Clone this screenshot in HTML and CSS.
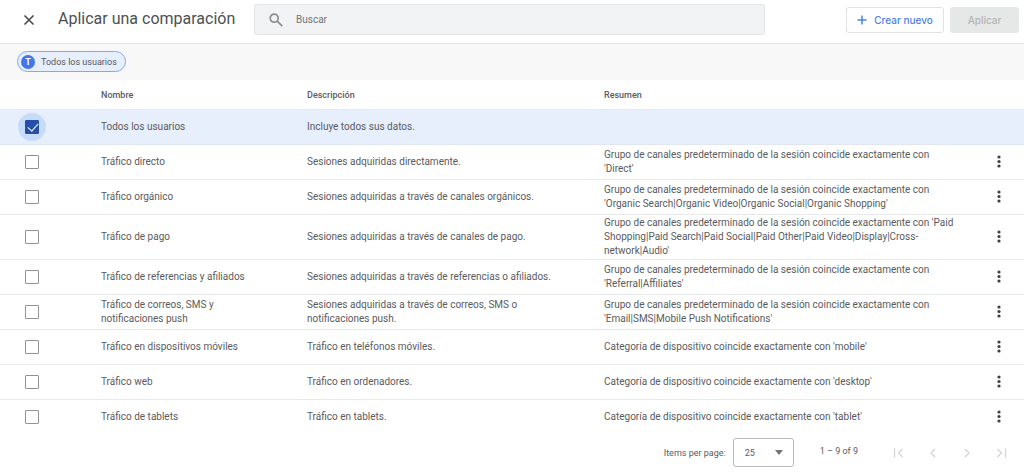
FILE: index.html
```html
<!DOCTYPE html>
<html lang="es">
<head>
<meta charset="utf-8">
<title>Aplicar una comparación</title>
<link rel="stylesheet" href="styles.css">
</head>
<body>
<svg class="defs" aria-hidden="true">
  <symbol id="more" viewBox="0 0 4 14"><circle cx="2" cy="2" r="1.6"/><circle cx="2" cy="6.500" r="1.600"/><circle cx="2" cy="11" r="1.600"/></symbol>
</svg>
<header class="topbar">
  <button class="close" aria-label="Cerrar"><svg width="12" height="12" viewBox="0 0 12 12"><path d="M1.5 1.5l9 9M10.500 1.500l-9 9"/></svg></button>
  <h1 class="title">Aplicar una comparación</h1>
  <label class="search">
    <svg width="14" height="14" viewBox="0 0 14 14"><circle cx="5.200" cy="5.200" r="4"/><path d="M8.200 8.200l5 5"/></svg>
    <input type="text" placeholder="Buscar" aria-label="Buscar">
  </label>
  <div class="actions">
    <button class="btn create"><svg width="10" height="10" viewBox="0 0 10 10"><path d="M5 0.500v9M0.500 5h9"/></svg>Crear nuevo</button>
    <button class="btn apply" disabled>Aplicar</button>
  </div>
</header>
<div class="chips"><button class="chip"><span class="badge">T</span>Todos los usuarios</button></div>
<main>
<table class="list">
  <colgroup><col class="c-check"><col class="c-name"><col class="c-desc"><col class="c-sum"><col class="c-menu"></colgroup>
  <thead><tr><th></th><th scope="col">Nombre</th><th scope="col">Descripción</th><th scope="col">Resumen</th><th></th></tr></thead>
  <tbody>
    <tr class="selected"><td><span class="halo"><input type="checkbox" checked aria-labelledby="n1"></span></td><td id="n1">Todos los usuarios</td><td>Incluye todos sus datos.</td><td></td><td></td></tr>
    <tr><td><input type="checkbox" aria-labelledby="n2"></td><td id="n2">Tráfico directo</td><td>Sesiones adquiridas directamente.</td><td>Grupo de canales predeterminado de la sesión coincide exactamente con 'Direct'</td><td><button class="menu" aria-label="Más opciones"><svg><use href="#more"/></svg></button></td></tr>
    <tr><td><input type="checkbox" aria-labelledby="n3"></td><td id="n3">Tráfico orgánico</td><td>Sesiones adquiridas a través de canales orgánicos.</td><td>Grupo de canales predeterminado de la sesión coincide exactamente con 'Organic Search|Organic Video|Organic Social|Organic Shopping'</td><td><button class="menu" aria-label="Más opciones"><svg><use href="#more"/></svg></button></td></tr>
    <tr><td><input type="checkbox" aria-labelledby="n4"></td><td id="n4">Tráfico de pago</td><td>Sesiones adquiridas a través de canales de pago.</td><td>Grupo de canales predeterminado de la sesión coincide exactamente con 'Paid Shopping|Paid Search|Paid Social|Paid Other|Paid Video|Display|Cross-network|Audio'</td><td><button class="menu" aria-label="Más opciones"><svg><use href="#more"/></svg></button></td></tr>
    <tr><td><input type="checkbox" aria-labelledby="n5"></td><td id="n5">Tráfico de referencias y afiliados</td><td>Sesiones adquiridas a través de referencias o afiliados.</td><td>Grupo de canales predeterminado de la sesión coincide exactamente con 'Referral|Affiliates'</td><td><button class="menu" aria-label="Más opciones"><svg><use href="#more"/></svg></button></td></tr>
    <tr><td><input type="checkbox" aria-labelledby="n6"></td><td id="n6">Tráfico de correos, SMS y notificaciones push</td><td>Sesiones adquiridas a través de correos, SMS o notificaciones push.</td><td>Grupo de canales predeterminado de la sesión coincide exactamente con 'Email|SMS|Mobile Push Notifications'</td><td><button class="menu" aria-label="Más opciones"><svg><use href="#more"/></svg></button></td></tr>
    <tr><td><input type="checkbox" aria-labelledby="n7"></td><td id="n7">Tráfico en dispositivos móviles</td><td>Tráfico en teléfonos móviles.</td><td>Categoría de dispositivo coincide exactamente con 'mobile'</td><td><button class="menu" aria-label="Más opciones"><svg><use href="#more"/></svg></button></td></tr>
    <tr><td><input type="checkbox" aria-labelledby="n8"></td><td id="n8">Tráfico web</td><td>Tráfico en ordenadores.</td><td>Categoría de dispositivo coincide exactamente con 'desktop'</td><td><button class="menu" aria-label="Más opciones"><svg><use href="#more"/></svg></button></td></tr>
    <tr><td><input type="checkbox" aria-labelledby="n9"></td><td id="n9">Tráfico de tablets</td><td>Tráfico en tablets.</td><td>Categoría de dispositivo coincide exactamente con 'tablet'</td><td><button class="menu" aria-label="Más opciones"><svg><use href="#more"/></svg></button></td></tr>
  </tbody>
</table>
</main>
<footer class="pager">
  <label for="size">Items per page:</label>
  <span class="size"><select id="size"><option>25</option></select><svg width="8" height="5" viewBox="0 0 8 5"><path d="M0 0h8L4 5z"/></svg></span>
  <span class="range">1 – 9 of 9</span>
  <nav class="nav">
    <button disabled aria-label="Primera página"><svg width="12" height="10" viewBox="0 0 12 10"><path d="M1.500 0.500v9M9.500 1L5.500 5l4 4"/></svg></button>
    <button disabled aria-label="Página anterior"><svg width="12" height="10" viewBox="0 0 12 10"><path d="M8 1L4 5l4 4"/></svg></button>
    <button disabled aria-label="Página siguiente"><svg width="12" height="10" viewBox="0 0 12 10"><path d="M4 1l4 4-4 4"/></svg></button>
    <button disabled aria-label="Última página"><svg width="12" height="10" viewBox="0 0 12 10"><path d="M2.500 1l4 4-4 4M10.500 0.500v9"/></svg></button>
  </nav>
</footer>
</body>
</html>
```
FILE: styles.css
```css
* { box-sizing: border-box; }
body { margin: 0; background: #fff; color: #5a5b5e; font: 10px/14px Roboto, sans-serif; }
button, input, select { font: inherit; color: inherit; margin: 0; }
button { padding: 0; border: 0; background: none; }
svg { display: block; fill: none; }
.defs { position: absolute; width: 0; height: 0; }

.topbar { display: flex; align-items: center; height: 44px; padding: 0 5px 4px 22px; border-bottom: 1px solid #e3e4e6; }
.close { padding: 1px; }
.close svg { stroke: #4a4b4e; stroke-width: 1.6; }
.title { flex: 0 0 196px; margin: 0 0 2px 22px; font: 400 16px/24px Roboto, sans-serif; color: #4e4f52; white-space: nowrap; }
.search { display: flex; align-items: center; flex: 0 1 511px; height: 31px; padding-left: 14px; gap: 13px; background: #f1f3f4; border: 1px solid #e2e4e6; border-radius: 3px; }
.search svg { stroke: #8c8e92; stroke-width: 1.7; flex: none; }
.search input { flex: 1; min-width: 0; padding: 0; border: 0; outline: 0; background: none; }
.search input::placeholder { color: #737579; opacity: 1; }
.actions { display: flex; gap: 6px; margin-left: auto; }
.btn { display: flex; align-items: center; justify-content: center; height: 26px; border-radius: 3px; font: 500 10px/14px Inter, sans-serif; white-space: nowrap; }
.create { width: 98px; gap: 7px; border: 1px solid #dfe1e4; color: #4d80eb; }
.create svg { stroke: #4d80eb; stroke-width: 1.5; }
.apply { width: 69px; background: #e6e7e7; color: #b3b4b5; }

.chips { display: flex; padding: 7px 17px 8px; background: #f8f8f8; }
.chip { display: flex; align-items: center; gap: 6px; height: 21px; padding: 0 8px 0 3px; border: 1px solid #81a8f1; border-radius: 11px; background: #e7effc; font: 9px/14px Roboto, sans-serif; color: #55585f; }
.badge { width: 14px; height: 14px; border-radius: 50%; background: #4276ea; color: #fff; font-weight: 700; text-align: center; }

.list { width: 100%; table-layout: fixed; border-collapse: separate; border-spacing: 0; }
.c-check { width: 100px; }
.c-name { width: 207px; }
.c-desc { width: 297px; }
.c-menu { width: 51px; }
th { height: 30px; padding: 0; border-bottom: 1px solid #e4e8ef; font-size: 9px; font-weight: 500; text-align: left; }
td { height: 35px; padding: 1px 15px 1px 0; border-bottom: 1px solid #e8e9eb; vertical-align: middle; }
td:nth-child(2), th:nth-child(2) { padding-left: 1px; padding-right: 48px; }
td:nth-child(3) { padding-right: 40px; }
td:first-child { padding-left: 25px; }
.selected td { background: #e7eefc; border-color: #e1e7f2; }
.selected td:first-child { padding-left: 18px; }
.list tr:last-child td { border-color: transparent; }
.halo { display: flex; align-items: center; justify-content: center; width: 28px; height: 28px; border-radius: 50%; background: #c7dbfa; }
input[type=checkbox] { display: block; appearance: none; width: 14px; height: 14px; border: 1px solid #929396; border-radius: 1px; background: #fff; }
input[type=checkbox]:checked { position: relative; border-color: #244fab; background: #244fab; }
input[type=checkbox]:checked::after { content: ""; position: absolute; left: 4px; top: 0; width: 5px; height: 9px; border: solid #fff; border-width: 0 1px 1px 0; transform: rotate(42deg); }
.menu { display: block; padding: 0 4px; margin-left: 20px; }
.list td:last-child { padding-right: 0; }
.menu svg { width: 4px; height: 14px; fill: #3e3f43; }

.pager { display: flex; align-items: center; justify-content: flex-end; padding: 3px 17px 0 0; font-size: 9px; }
.size { display: grid; align-items: center; width: 61px; margin: 0 26px 0 7px; }
.size select { grid-area: 1 / 1; appearance: none; width: 100%; height: 29px; padding: 0 11px; border: 1px solid #b9babc; border-radius: 3px; background: #fff; }
.size svg { grid-area: 1 / 1; justify-self: end; margin-right: 11px; fill: #737477; pointer-events: none; }
.range { margin-bottom: 3px; }
.nav { display: flex; gap: 22px; margin-left: 35px; }
.nav svg { stroke: #d2d3d5; stroke-width: 1.3; }
```
